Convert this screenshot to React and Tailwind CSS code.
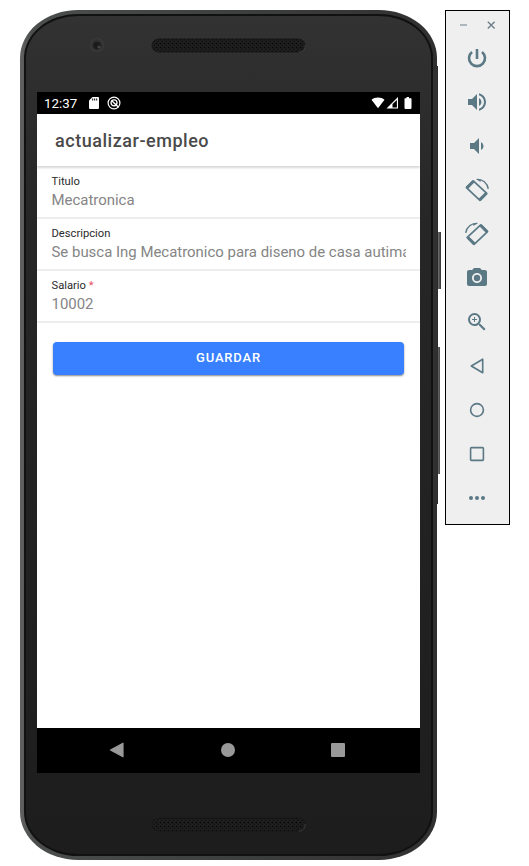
import React from "react";
import { MdVolumeUp, MdVolumeDown, MdPhotoCamera, MdZoomIn } from "react-icons/md";

function Speaker() {
  return (
    <svg width="155" height="15" viewBox="0 0 155 15">
      <defs>
        <pattern id="mesh" width="4" height="4" patternUnits="userSpaceOnUse">
          <rect width="4" height="4" fill="#212121" />
          <circle cx="1.5" cy="1.5" r="1.1" fill="#090909" />
          <circle cx="3.5" cy="3.5" r="0.9" fill="#0c0c0c" />
        </pattern>
      </defs>
      <rect x="1" y="1" width="153" height="13" rx="6.5" fill="url(#mesh)" stroke="#191919" />
      <path d="M148 14.3a6.7 6.7 0 0 0 6.2-7.3" fill="none" stroke="#454545" strokeWidth="0.8" />
    </svg>
  );
}

function StatusBar() {
  return (
    <div className="flex h-[22px] shrink-0 items-center bg-black pr-[7px] pl-[7px] text-white">
      <span className="w-[33px] pt-px text-[13.3px] leading-none whitespace-nowrap">12:37</span>
      <svg className="ml-[12px]" width="10" height="12" viewBox="0 0 10 12">
        <path d="M3.5 0H9a1 1 0 0 1 1 1v10a1 1 0 0 1-1 1H1a1 1 0 0 1-1-1V3.6z" fill="#fff" />
        <path d="M3.7 1.5v2M5.7 1.5v2M7.7 1.5v2" stroke="#000" strokeWidth="1" />
      </svg>
      <svg className="ml-[8px]" width="14" height="14" viewBox="0 0 14 14" fill="none" stroke="#fff">
        <circle cx="7" cy="7" r="5.9" strokeWidth="1.2" />
        <circle cx="7" cy="6.8" r="3" strokeWidth="1.3" />
        <path d="M4.5 4.5l7 6.8" strokeWidth="1.4" />
      </svg>
      <svg className="ml-auto" width="42" height="14" viewBox="0 0 42 14">
        <path d="M.5 3.8C4 .7 10 .7 13.5 3.8L7 12.2z" fill="#fff" />
        <path d="M27 1v11.5H15.5z" fill="#fff" />
        <path d="M25.9 4v7.4h-4.4V8z" fill="#000" />
        <path d="M35.5 1h2.5v1.2h2q.5 0 .5.5V12q0 1-1 1h-5q-1 0-1-1V2.7q0-.5.5-.5h1.5z" fill="#fff" />
      </svg>
    </div>
  );
}

function Field({ label, value, required }) {
  return (
    <div className="h-[52px] border-b-2 border-[#ededed] pr-[14.5px] pl-[14.5px]">
      <div className="pt-[7px] text-[11.2px] leading-[15px] text-[#2b2b2b]">
        {label}
        {required && <span className="text-[#e8505f]"> *</span>}
      </div>
      <div className="mt-[1px] overflow-hidden text-[14.95px] leading-[20px] whitespace-nowrap text-[#858585]">{value}</div>
    </div>
  );
}

function NavBar() {
  return (
    <div className="flex h-[45px] shrink-0 items-center justify-between bg-black pr-[75px] pb-px pl-[72px]">
      <svg width="16" height="16" viewBox="0 0 16 16">
        <path d="M14 1.2v13.6L1.5 8z" fill="#999" stroke="#999" strokeWidth="1.2" strokeLinejoin="round" />
      </svg>
      <span className="size-[14px] rounded-full bg-[#999]" />
      <span className="size-[14px] rounded-[1px] bg-[#999]" />
    </div>
  );
}

function Phone() {
  return (
    <div className="relative h-[850px] w-[417px] shrink-0">
      <div className="absolute top-[222px] left-[416px] h-[57px] w-[5px] bg-linear-to-r from-[#2a2829] via-[#6a6869] to-[#333132]" />
      <div className="absolute top-[337px] left-[416px] h-[127px] w-[4px] bg-linear-to-r from-[#2a2829] via-[#6a6869] to-[#454344]" />
      <div className="absolute top-[56px] left-[414px] h-[438px] w-[4px] bg-[#2c2b2b]" />
      <div className="relative h-full rounded-[58px/48px] bg-linear-to-r from-[#626262] via-[#4c4e4e] via-3% to-[#303030] p-[4px]">
        <div className="h-full rounded-[54px/44px] border-2 border-[#111] bg-linear-to-b from-[#323232] via-[#262626] via-25% to-[#1d1d1e] px-[11px]">
          <div className="relative flex h-[76px] justify-center pt-[22px]">
            <Speaker />
            <svg className="absolute top-[20px] left-[51px]" width="18" height="18" viewBox="0 0 18 18">
              <circle cx="9" cy="9" r="6.5" fill="#303030" stroke="#393939" strokeWidth="1.5" />
              <circle cx="9" cy="9.5" r="3.7" fill="#1b1b1b" />
              <circle cx="11" cy="11" r="1.6" fill="#444" />
            </svg>
          </div>
          <div className="flex h-[681px] w-[383px] flex-col overflow-hidden bg-white">
            <StatusBar />
            <header className="relative flex h-[52px] shrink-0 items-center pl-[18px] text-[18px] font-medium tracking-[0.53px] text-[#4a4a4a] shadow-[0_2px_2px_#d9d9d9]">
              actualizar-empleo
            </header>
            <main className="flex-1 pt-px">
              <Field label="Titulo" value="Mecatronica" />
              <Field label="Descripcion" value="Se busca Ing Mecatronico para diseno de casa autimatizada" />
              <Field label="Salario" value="10002" required />
              <button className="mt-[19px] ml-[16px] block h-[33px] w-[351px] rounded-[4px] bg-[#3880ff] pb-px text-[13px] font-medium tracking-[0.8px] text-white shadow-[0_1px_2px_#888]">
                GUARDAR
              </button>
            </main>
            <NavBar />
          </div>
          <div className="flex justify-center pt-[44px]">
            <Speaker />
          </div>
        </div>
      </div>
    </div>
  );
}

function RotateIcon({ mirrored }) {
  return (
    <svg className={mirrored ? "-scale-x-100" : ""} width="26" height="26" viewBox="-1 -1 26 26" fill="none" stroke="currentColor" strokeLinejoin="round">
      <path d="M8.3 2.9L21.8 15.4L14.9 22.4L1.4 9.7Z" strokeWidth="1.7" />
      <path d="M1.9 9.9L8.5 3.3M14.7 21.9L21.3 15.3" strokeWidth="3" />
      <path d="M11.6 1.4C17.5 .8 22.4 5 23.3 10.8" strokeWidth="1.4" />
      <path d="M12 1.5L15.3 3.6L16 2Z" fill="currentColor" strokeWidth="0.4" />
    </svg>
  );
}

function PowerIcon() {
  return (
    <svg width="24" height="24" viewBox="0 0 24 24" fill="none" stroke="currentColor" strokeWidth="2.6">
      <path d="M12 3v10M7 5.9a8 8 0 1 0 10 0" />
    </svg>
  );
}

function Toolbar() {
  const icons = [
    <PowerIcon />,
    <MdVolumeUp size={24} />,
    <MdVolumeDown size={24} />,
    <RotateIcon />,
    <RotateIcon mirrored />,
    <MdPhotoCamera size={24} />,
    <MdZoomIn size={24} />,
    <svg width="24" height="24" viewBox="0 0 24 24" fill="none" stroke="currentColor" strokeWidth="1.6" strokeLinejoin="round">
      <path d="M17.7 5.2v13.6L6.3 12z" />
    </svg>,
    <svg width="24" height="24" viewBox="0 0 24 24" fill="none" stroke="currentColor" strokeWidth="1.6">
      <circle cx="12" cy="12" r="6.4" />
    </svg>,
    <svg width="24" height="24" viewBox="0 0 24 24" fill="none" stroke="currentColor" strokeWidth="1.6">
      <rect x="5.6" y="5.6" width="12.8" height="12.8" rx="0.8" />
    </svg>,
    <svg width="24" height="24" viewBox="0 0 24 24" fill="currentColor">
      <circle cx="6" cy="12" r="2" />
      <circle cx="12" cy="12" r="2" />
      <circle cx="18" cy="12" r="2" />
    </svg>,
  ];
  return (
    <aside className="flex h-[515px] w-[65px] shrink-0 flex-col items-center border border-black bg-[#efefef] text-[#5b7885]">
      <div className="flex h-[25px] w-full justify-between pt-[9px] pr-[13px] pl-[13px]">
        <svg width="10" height="10" viewBox="0 0 10 10">
          <path d="M1 5h7" stroke="#96a3aa" strokeWidth="1.5" />
        </svg>
        <svg width="10" height="10" viewBox="0 0 10 10">
          <path d="M1.8 1.8l6.8 6.6M8.6 1.8L1.8 8.4" stroke="#6d808a" strokeWidth="1.4" />
        </svg>
      </div>
      {icons.map((icon, i) => (
        <div key={i} className="flex h-[44px] w-full shrink-0 items-center justify-center pr-px">
          {icon}
        </div>
      ))}
    </aside>
  );
}

export default function App() {
  return (
    <div className="flex h-[866px] w-[529px] items-start gap-[8px] overflow-hidden bg-white pt-[10px] pl-[20px] font-[Roboto,sans-serif]">
      <Phone />
      <Toolbar />
    </div>
  );
}
